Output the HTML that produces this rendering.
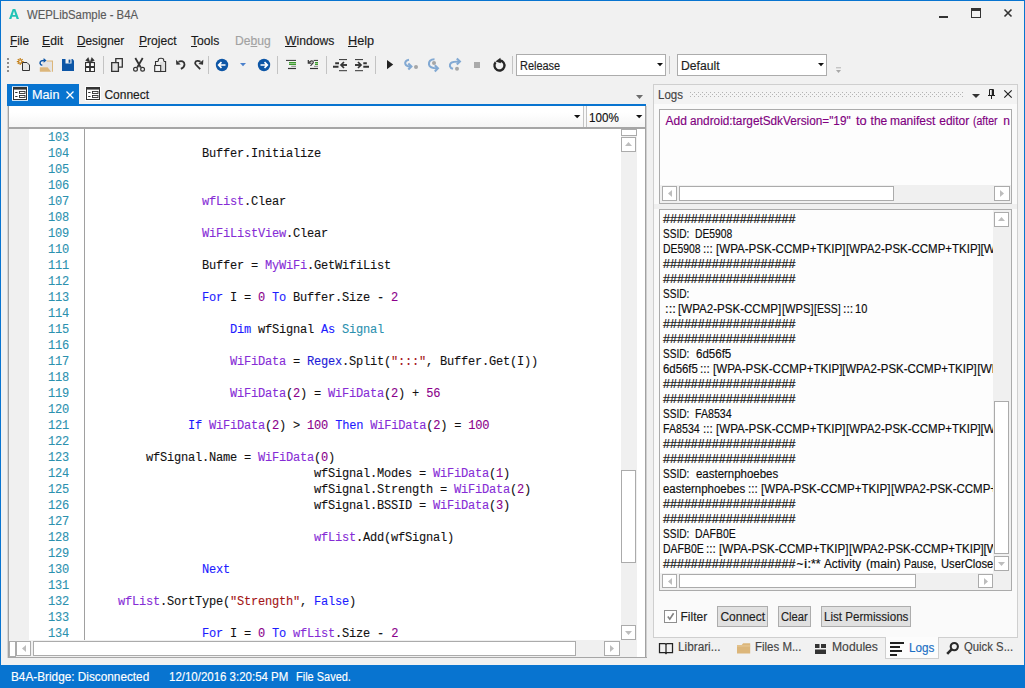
<!DOCTYPE html>
<html>
<head>
<meta charset="utf-8">
<title>WEPLibSample - B4A</title>
<style>
*{box-sizing:border-box;margin:0;padding:0}
html,body{width:1025px;height:688px;overflow:hidden;background:#f1f1f1}
body{position:relative;font-family:"Liberation Sans",sans-serif;font-size:12px;color:#1e1e1e}
.a{position:absolute}
.t{-webkit-text-stroke:0.15px currentColor}
.c,.ln{-webkit-text-stroke:0.1px currentColor}
svg{position:absolute;overflow:visible}
.t{position:absolute;white-space:pre;line-height:16px;height:16px;font-size:12px;transform-origin:0 0}
.t u{text-decoration:underline;text-decoration-thickness:1px;text-underline-offset:1px}
.c{position:absolute;white-space:pre;font-family:"Liberation Mono",monospace;font-size:12px;letter-spacing:-0.2px;line-height:16px;height:16px;color:#111}
.ln{position:absolute;left:40px;width:29px;text-align:right;white-space:pre;font-family:"Liberation Mono",monospace;font-size:12px;letter-spacing:-0.2px;line-height:16px;height:16px;color:#2b91af}
.k{color:#1c1cff}.r{color:#1c1cd8}.v{color:#862cd6}.n{color:#8b008b}.s{color:#a31515}.ty{color:#2b91af}
.sb{position:absolute;background:#fff;border:1px solid #ababab}
</style>
</head>
<body>
<div class="a" style="left:0px;top:0px;width:1025px;height:688px;background:#f1f1f1;border:1px solid #0874d0;"></div>
<div class="a" style="left:0px;top:0px;width:1025px;height:1.2px;background:#0874d0;"></div>
<!-- title bar -->
<svg class="a" style="left:9px;top:9px" width="10" height="10" viewBox="0 0 10 10"><path d="M0 10L3.700 0h2.600L10 10H7.600L6.900 7.800H3.100L2.400 10zM3.700 5.900h2.600L5 1.900z" fill="#22c3b5"/></svg>
<div class="t" style="left:26.95px;top:7px;color:#5a5a5a;transform:scaleX(0.9463);">WEPLibSample - B4A</div>
<div class="a" style="left:939px;top:16px;width:9px;height:2px;background:#333;"></div>
<div class="a" style="left:971px;top:8px;width:10px;height:10px;border:1px solid #333;border-top-width:3px"></div>
<svg class="a" style="left:1004px;top:9px" width="8" height="8" viewBox="0 0 8 8"><path d="M0.500 0.500l7 7M7.500 0.500l-7 7" stroke="#333" stroke-width="1.600" fill="none"/></svg>
<!-- menu -->
<div class="t" style="left:9.53px;top:33px;color:#1b1b1b;transform:scaleX(0.9821);"><u>F</u>ile</div>
<div class="t" style="left:42.00px;top:33px;color:#1b1b1b;transform:scaleX(1.0201);"><u>E</u>dit</div>
<div class="t" style="left:77.03px;top:33px;color:#1b1b1b;transform:scaleX(0.9821);"><u>D</u>esigner</div>
<div class="t" style="left:138.51px;top:33px;color:#1b1b1b;transform:scaleX(1.0062);"><u>P</u>roject</div>
<div class="t" style="left:190.73px;top:33px;color:#1b1b1b;transform:scaleX(1.0125);"><u>T</u>ools</div>
<div class="t" style="left:234.75px;top:33px;color:#a2a2a2;transform:scaleX(1.0118);">De<u>b</u>ug</div>
<div class="t" style="left:285.20px;top:33px;color:#1b1b1b;transform:scaleX(1.0116);"><u>W</u>indows</div>
<div class="t" style="left:348.46px;top:33px;color:#1b1b1b;transform:scaleX(1.0564);"><u>H</u>elp</div>
<!-- toolbar -->
<svg class="a" style="left:0;top:0" width="1025" height="80" viewBox="0 0 1025 80"><rect x="7" y="58" width="2" height="2" fill="#8c8c8c"/><rect x="7" y="62" width="2" height="2" fill="#8c8c8c"/><rect x="7" y="66" width="2" height="2" fill="#8c8c8c"/><rect x="7" y="70" width="2" height="2" fill="#8c8c8c"/><rect x="103" y="56" width="1" height="18" fill="#c3c3c3"/><rect x="208" y="56" width="1" height="18" fill="#c3c3c3"/><rect x="277" y="56" width="1" height="18" fill="#c3c3c3"/><rect x="326" y="56" width="1" height="18" fill="#c3c3c3"/><rect x="375" y="56" width="1" height="18" fill="#c3c3c3"/><rect x="512" y="56" width="1" height="18" fill="#c3c3c3"/><rect x="669" y="56" width="1" height="18" fill="#c3c3c3"/><g stroke="#c4801a" stroke-width="1.250" stroke-linecap="butt"><path d="M20.200 58v2.500M20.200 62.500v2.500M16.800 61.500h2.500M21.200 61.500h2.500M17.800 59.100l1.700 1.700M20.900 62.200l1.700 1.700M22.600 59.100l-1.700 1.700M19.500 62.200l-1.700 1.700"/></g><path d="M22.5 62.5h4.5l2.5 2.5v5.5h-7z" fill="#e6e6e6" stroke="#333" stroke-width="1"/><path d="M46.600 60.600h6.400v11.200h-1.100v-10h-5.300z" fill="#dcb67a"/><path d="M42.200 61.800h9.700v10h-1l-3.500-4.600h-5.200z" fill="#e4e4e4"/><path d="M39.800 67.200h7.800l3.600 4.600h-11.400z" fill="#dcb67a"/><path d="M42.300 65.300c-2.600-0.300-3-3.300-1-4.400 1-0.500 2.200-0.500 3.200-0.400" fill="none" stroke="#0d56a6" stroke-width="1.500"/><path d="M43.600 58l3 2.400-3 2.400z" fill="#0d56a6"/><path d="M62 59h10.5l1.5 1.5v10.5h-12z" fill="#0d56a6"/><rect x="65.5" y="59" width="6" height="4.5" fill="#f1f1f1"/><rect x="68.6" y="59.6" width="1.8" height="3.2" fill="#0d56a6"/><rect x="85" y="62" width="10" height="10" fill="#333"/><g fill="#fff"><rect x="86.100" y="63.100" width="3" height="2.900"/><rect x="90.900" y="63.100" width="3" height="2.900"/><rect x="86.100" y="68" width="3" height="3"/><rect x="90.900" y="68" width="3" height="3"/></g><path d="M90 62.500L85.700 60.400 88.200 57.600zM90 62.500L94.300 60.400 91.800 57.600z" fill="#333" stroke="#333" stroke-width="0.500" stroke-linejoin="round"/><path d="M115.800 58.700h6.500v8.500h-6.500z" fill="#f2f2f2" stroke="#333" stroke-width="1.300"/><path d="M111.700 62.600h6.700v8.700h-6.700z" fill="#e2e2e2" stroke="#333" stroke-width="1.300"/><g fill="none" stroke="#333"><path d="M135.300 58L140.800 67.500M142.700 58L137.200 67.500" stroke-width="1.800"/><circle cx="135.500" cy="69.300" r="1.900" stroke-width="1.200"/><circle cx="142.600" cy="69.300" r="1.900" stroke-width="1.200"/></g><rect x="160" y="62" width="5.500" height="9" fill="#e0e0e0"/><g fill="none" stroke="#333" stroke-width="1.100"><path d="M158 61.500h-2.500v4M164 61.500h1.600v10h-4.600"/><path d="M158.300 61.500v-1.500c0-1 1-1.700 2.700-1.700s2.700 0.700 2.700 1.700v1.500" /><rect x="154.700" y="65.500" width="6" height="6" fill="#f6f6f6"/></g><path d="M178.500 61.800c2.800-1.600 6-0.300 6 2.700 0 1.900-1.300 3.300-3.600 4.400" fill="none" stroke="#333" stroke-width="1.800"/><path d="M176 59.800l0.300 4.900 4.400-0.300z" fill="#333"/><path d="M200.200 69.200l-4.500-4.700c-1.200-1.500-0.300-3.300 1.500-3.600 1-0.200 2.300 0.200 3.300 0.900" fill="none" stroke="#333" stroke-width="1.800"/><path d="M203.300 59.700l-0.300 5-4.600-0.600z" fill="#333"/><circle cx="222" cy="65" r="6.200" fill="#0d56a6"/><path d="M225.500 65h-6.500M221.500 62.200l-2.800 2.800 2.800 2.800" fill="none" stroke="#fff" stroke-width="1.700"/><path d="M240 63h6l-3 3.200z" fill="#4a80cc"/><circle cx="264" cy="65" r="6.200" fill="#0d56a6"/><path d="M260.500 65h6.500M264.500 62.200l2.800 2.800-2.800 2.800" fill="none" stroke="#fff" stroke-width="1.700"/><path d="M286 60.400h10" stroke="#333" stroke-width="1"/><path d="M289 62.600h7M289 64.400h7" stroke="#3d9a2d" stroke-width="1.400"/><path d="M291.200 66.300h4.800" stroke="#8a8a8a" stroke-width="1"/><path d="M288 68.500h8" stroke="#333" stroke-width="1.200"/><path d="M308.300 60v3.200h3.200" fill="none" stroke="#333" stroke-width="1.200"/><path d="M309 62.800c1.200-2.600 4.300-2.600 4.300-0.500 0 1.500-2.300 2-2.600 3.700" fill="none" stroke="#333" stroke-width="1.200"/><path d="M313.700 60.400h4.300" stroke="#333" stroke-width="1"/><path d="M315 62.600h3M315 64.400h3" stroke="#3d9a2d" stroke-width="1.400"/><path d="M314 66.300h4" stroke="#8a8a8a" stroke-width="1"/><path d="M310 68.500h8" stroke="#333" stroke-width="1.200"/><g fill="none" stroke="#333"><path d="M339 59.600h8M339 70.700h8" stroke-width="1"/><path d="M335.200 63.200h3.800M333 66.700h5.500" stroke-width="1.900"/><path d="M341.500 65h5.500" stroke-width="1.900"/><path d="M344 62l-3 3 3 3" stroke-width="1.700"/></g><g fill="none" stroke="#333"><path d="M355 59.600h8M355 70.700h8" stroke-width="1"/><path d="M363.300 63.200h3.500M363.300 66.700h5.700" stroke-width="1.900"/><path d="M355 65h5.500" stroke-width="1.900"/><path d="M358 62l3 3-3 3" stroke-width="1.700"/></g><path d="M387 60l6.200 4.600-6.200 4.600z" fill="#222"/><g fill="none" stroke="#82a9d3" stroke-width="2.100"><path d="M409 59.700c-3 0.500-4.500 2.500-3.500 4.700 0.800 1.800 2.500 2.200 5.300 2.200"/><path d="M408.300 63.400l3.100 3.100-3.100 3.100"/></g><circle cx="416" cy="67" r="2" fill="#a6a6a6"/><g fill="none" stroke="#82a9d3" stroke-width="2.100"><path d="M434.500 59.200c-4 0-6 2.500-5.500 5.400 0.500 2.700 3 3.700 8.300 3.700"/><path d="M434.800 65.200l3.100 3.100-3.100 3.100"/></g><circle cx="434" cy="63" r="2" fill="#a6a6a6"/><g fill="none" stroke="#82a9d3" stroke-width="2.100"><path d="M453 68.800c-3.500-1-4-4-2-5.900 1.500-1.400 4-1.400 8.800-1.400"/><path d="M456.800 58.400l3.100 3.100-3.100 3.100"/></g><circle cx="457" cy="68.800" r="2" fill="#a6a6a6"/><rect x="474" y="62" width="6" height="6" fill="#aaa"/><path d="M495.600 62.300a5 5 0 1 0 4.300-1.800" fill="none" stroke="#262626" stroke-width="2.300"/><path d="M495.400 61.600l5-3.900 0.500 5.600z" fill="#262626"/><rect x="836" y="67.300" width="5" height="1" fill="#b2b2b2"/><path d="M836 70h5l-2.500 3z" fill="#a8a8a8"/></svg>
<div class="a" style="left:516px;top:54px;width:150px;height:22px;background:#fff;border:1px solid #acacac;"></div>
<div class="t" style="left:519.50px;top:58px;color:#1e1e1e;transform:scaleX(0.9127);">Release</div>
<svg class="a" style="left:656.8px;top:62.9px" width="6" height="3.2" viewBox="0 0 6 3.2"><path d="M0 0h6l-3.0 3.2z" fill="#111"/></svg>
<div class="a" style="left:677px;top:54px;width:150px;height:22px;background:#fff;border:1px solid #acacac;"></div>
<div class="t" style="left:680.50px;top:58px;color:#1e1e1e;transform:scaleX(1.0149);">Default</div>
<svg class="a" style="left:817.8px;top:62.9px" width="6" height="3.2" viewBox="0 0 6 3.2"><path d="M0 0h6l-3.0 3.2z" fill="#111"/></svg>
<!-- document tabs -->
<div class="a" style="left:7px;top:84px;width:72px;height:20px;background:#0874d0;"></div>
<div class="a" style="left:7px;top:104px;width:639.3px;height:2px;background:#0874d0;"></div>
<svg class="a" style="left:12px;top:86px" width="16" height="15" viewBox="0 0 16 15"><rect x="0" y="0.300" width="16" height="14.500" fill="#fff"/><rect x="1.500" y="1.500" width="13" height="12" fill="none" stroke="#333" stroke-width="1"/><rect x="1" y="1" width="14" height="2.600" fill="#333"/><path d="M3.200 6.500h2.300M3.200 10.500h2.300" stroke="#333" stroke-width="1"/><rect x="7.500" y="5.500" width="5.500" height="2" fill="none" stroke="#333" stroke-width="0.900"/><rect x="7.500" y="9.500" width="5.500" height="2" fill="none" stroke="#333" stroke-width="0.900"/></svg>
<div class="t" style="left:32.16px;top:86.5px;color:#fff;transform:scaleX(1.0558);">Main</div>
<svg class="a" style="left:66px;top:91px" width="8" height="8" viewBox="0 0 8 8"><path d="M0.500 0.500l7 7M7.500 0.500l-7 7" stroke="#fff" stroke-width="1.300" fill="none"/></svg>
<svg class="a" style="left:84.5px;top:86px" width="16" height="15" viewBox="0 0 16 15"><rect x="0" y="0.300" width="16" height="14.500" fill="#fff"/><rect x="1.500" y="1.500" width="13" height="12" fill="none" stroke="#333" stroke-width="1"/><rect x="1" y="1" width="14" height="2.600" fill="#333"/><path d="M3.200 6.500h2.300M3.200 10.500h2.300" stroke="#333" stroke-width="1"/><rect x="7.500" y="5.500" width="5.500" height="2" fill="none" stroke="#333" stroke-width="0.900"/><rect x="7.500" y="9.500" width="5.500" height="2" fill="none" stroke="#333" stroke-width="0.900"/></svg>
<div class="t" style="left:104.39px;top:86.5px;color:#1b1b1b;">Connect</div>
<svg class="a" style="left:636px;top:95px" width="7" height="4" viewBox="0 0 7 4"><path d="M0 0h7l-3.5 4z" fill="#6d6d6d"/></svg>
<!-- editor -->
<div class="a" style="left:8px;top:106px;width:638px;height:551px;background:#fff;"></div>
<div class="a" style="left:7px;top:106px;width:1px;height:552px;background:#d6d6d6;"></div>
<div class="a" style="left:8px;top:106px;width:1px;height:552px;background:#a2a2a2;"></div>
<div class="a" style="left:645px;top:106px;width:1px;height:552px;background:#a2a2a2;"></div>
<div class="a" style="left:646px;top:106px;width:1px;height:552px;background:#cfcfcf;"></div>
<div class="a" style="left:7.5px;top:656.6px;width:639px;height:1.7px;background:#a6a6a6;"></div>
<div class="a" style="left:9px;top:127px;width:636px;height:1.8px;background:#a6a6a6;"></div>
<div class="a" style="left:9px;top:106px;width:636px;height:21px;background:linear-gradient(#ffffff 30%,#f5f5f5)"></div>
<div class="a" style="left:583px;top:106px;width:1px;height:21px;background:#c4c4c4;"></div>
<div class="a" style="left:584px;top:106px;width:2px;height:21px;background:#f8f8f8;"></div>
<div class="a" style="left:586px;top:106px;width:1px;height:21px;background:#c4c4c4;"></div>
<svg class="a" style="left:574.2px;top:114.8px" width="6.4" height="3.3" viewBox="0 0 6.4 3.3"><path d="M0 0h6.4l-3.2 3.3z" fill="#111"/></svg>
<svg class="a" style="left:636.2px;top:114.8px" width="6.4" height="3.3" viewBox="0 0 6.4 3.3"><path d="M0 0h6.4l-3.2 3.3z" fill="#111"/></svg>
<div class="t" style="left:588.61px;top:110px;color:#111;transform:scaleX(0.9711);">100%</div>
<div class="a" style="left:9px;top:129px;width:20px;height:511px;background:#f0f0f0;"></div>
<div class="a" style="left:84px;top:129px;width:1px;height:511px;background:#a0a0a0;"></div>
<div class="ln" style="top:130px">103</div>
<div class="ln" style="top:146px">104</div>
<div class="c" style="left:202px;top:146px">Buffer.Initialize</div>
<div class="ln" style="top:162px">105</div>
<div class="ln" style="top:178px">106</div>
<div class="ln" style="top:194px">107</div>
<div class="c" style="left:202px;top:194px"><span class="v">wfList</span>.Clear</div>
<div class="ln" style="top:210px">108</div>
<div class="ln" style="top:226px">109</div>
<div class="c" style="left:202px;top:226px"><span class="v">WiFiListView</span>.Clear</div>
<div class="ln" style="top:242px">110</div>
<div class="ln" style="top:258px">111</div>
<div class="c" style="left:202px;top:258px">Buffer = <span class="v">MyWiFi</span>.GetWifiList</div>
<div class="ln" style="top:274px">112</div>
<div class="ln" style="top:290px">113</div>
<div class="c" style="left:202px;top:290px"><span class="k">For</span> I = <span class="n">0</span> <span class="k">To</span> Buffer.Size - <span class="n">2</span></div>
<div class="ln" style="top:306px">114</div>
<div class="ln" style="top:322px">115</div>
<div class="c" style="left:230px;top:322px"><span class="k">Dim</span> wfSignal <span class="k">As</span> <span class="ty">Signal</span></div>
<div class="ln" style="top:338px">116</div>
<div class="ln" style="top:354px">117</div>
<div class="c" style="left:230px;top:354px"><span class="v">WiFiData</span> = <span class="r">Regex</span>.Split(<span class="s">":::"</span>, Buffer.Get(I))</div>
<div class="ln" style="top:370px">118</div>
<div class="ln" style="top:386px">119</div>
<div class="c" style="left:230px;top:386px"><span class="v">WiFiData</span>(<span class="n">2</span>) = <span class="v">WiFiData</span>(<span class="n">2</span>) + <span class="n">56</span></div>
<div class="ln" style="top:402px">120</div>
<div class="ln" style="top:418px">121</div>
<div class="c" style="left:188px;top:418px"><span class="k">If</span> <span class="v">WiFiData</span>(<span class="n">2</span>) &gt; <span class="n">100</span> <span class="k">Then</span> <span class="v">WiFiData</span>(<span class="n">2</span>) = <span class="n">100</span></div>
<div class="ln" style="top:434px">122</div>
<div class="ln" style="top:450px">123</div>
<div class="c" style="left:146px;top:450px">wfSignal.Name = <span class="v">WiFiData</span>(<span class="n">0</span>)</div>
<div class="ln" style="top:466px">124</div>
<div class="c" style="left:314px;top:466px">wfSignal.Modes = <span class="v">WiFiData</span>(<span class="n">1</span>)</div>
<div class="ln" style="top:482px">125</div>
<div class="c" style="left:314px;top:482px">wfSignal.Strength = <span class="v">WiFiData</span>(<span class="n">2</span>)</div>
<div class="ln" style="top:498px">126</div>
<div class="c" style="left:314px;top:498px">wfSignal.BSSID = <span class="v">WiFiData</span>(<span class="n">3</span>)</div>
<div class="ln" style="top:514px">127</div>
<div class="ln" style="top:530px">128</div>
<div class="c" style="left:314px;top:530px"><span class="v">wfList</span>.Add(wfSignal)</div>
<div class="ln" style="top:546px">129</div>
<div class="ln" style="top:562px">130</div>
<div class="c" style="left:202px;top:562px"><span class="k">Next</span></div>
<div class="ln" style="top:578px">131</div>
<div class="ln" style="top:594px">132</div>
<div class="c" style="left:118px;top:594px"><span class="v">wfList</span>.SortType(<span class="s">"Strength"</span>, <span class="k">False</span>)</div>
<div class="ln" style="top:610px">133</div>
<div class="ln" style="top:626px">134</div>
<div class="c" style="left:202px;top:626px"><span class="k">For</span> I = <span class="n">0</span> <span class="k">To</span> <span class="v">wfList</span>.Size - <span class="n">2</span></div>
<div class="a" style="left:621px;top:129px;width:15.5px;height:528px;background:#f0f0f0;"></div>
<div class="a" style="left:620.5px;top:129px;width:16px;height:7px;background:#fff;border:1px solid #ababab;"></div>
<div class="sb" style="left:621px;top:137px;width:15px;height:15px"></div>
<svg class="a" style="left:625px;top:142px" width="7" height="4" viewBox="0 0 7 4"><path d="M0 4h7L3.500 0z" fill="#bdbdbd"/></svg>
<div class="sb" style="left:621px;top:470px;width:15px;height:93px"></div>
<div class="sb" style="left:621px;top:625px;width:15px;height:15px"></div>
<svg class="a" style="left:625px;top:631px" width="7" height="4" viewBox="0 0 7 4"><path d="M0 0h7L3.500 4z" fill="#bdbdbd"/></svg>
<div class="a" style="left:9px;top:640px;width:612px;height:17px;background:#f0f0f0;"></div>
<div class="a" style="left:9px;top:640.5px;width:7px;height:16px;background:#fff;border:1px solid #ababab;"></div>
<div class="sb" style="left:16px;top:641px;width:15px;height:15px"></div>
<svg class="a" style="left:22px;top:645px" width="4" height="7" viewBox="0 0 4 7"><path d="M4 0v7L0 3.500z" fill="#bdbdbd"/></svg>
<div class="sb" style="left:33px;top:641px;width:543px;height:15px"></div>
<div class="sb" style="left:604px;top:641px;width:16px;height:15px"></div>
<svg class="a" style="left:610px;top:645px" width="4" height="7" viewBox="0 0 4 7"><path d="M0 0v7l4-3.500z" fill="#bdbdbd"/></svg>
<!-- right panel -->
<div class="a" style="left:653px;top:84px;width:365px;height:554px;background:#fafafa;border:1px solid #cfcfcf;"></div>
<div class="a" style="left:654px;top:85px;width:363px;height:19px;background:#f3f3f3;"></div>
<div class="t" style="left:658.26px;top:87px;color:#444;transform:scaleX(0.9592);">Logs</div>
<svg class="a" style="left:690px;top:92px" width="274" height="5" viewBox="0 0 274 5"><defs><pattern id="dp" width="4" height="4" patternUnits="userSpaceOnUse"><rect x="0" y="0" width="1" height="1" fill="#b4b4b4"/><rect x="2" y="2" width="1" height="1" fill="#b4b4b4"/></pattern></defs><rect width="274" height="5" fill="url(#dp)"/></svg>
<svg class="a" style="left:972px;top:94px" width="8" height="4" viewBox="0 0 8 4"><path d="M0 0h8L4 4z" fill="#333"/></svg>
<svg class="a" style="left:988px;top:89px" width="7" height="10" viewBox="0 0 7 10"><path d="M1.500 0.500h4v5.500M1.500 0.500v5.500M0 6.500h7M3.500 6.500v3.500" fill="none" stroke="#222" stroke-width="1"/><path d="M4.500 1v5" stroke="#222" stroke-width="1.500"/></svg>
<svg class="a" style="left:1004px;top:90px" width="8" height="8" viewBox="0 0 8 8"><path d="M0.300 0.300l7.400 7.400M7.700 0.300l-7.400 7.400" stroke="#222" stroke-width="1.200" fill="none"/></svg>
<div class="a" style="left:659px;top:109px;width:353px;height:95px;background:#fdfdfd;border:1px solid #ababab;"></div>
<div class="a" style="left:660px;top:110px;width:351px;height:20px;overflow:hidden"><div class="t" style="left:5.48px;top:3px;color:#800080;">Add</div><div class="t" style="left:30.25px;top:3px;color:#800080;transform:scaleX(0.9818);">android:targetSdkVersion="19"</div><div class="t" style="left:196.06px;top:3px;color:#800080;transform:scaleX(1.0727);">to</div><div class="t" style="left:210.57px;top:3px;color:#800080;">the</div><div class="t" style="left:229.95px;top:3px;color:#800080;">manifest</div><div class="t" style="left:279.24px;top:3px;color:#800080;">editor</div><div class="t" style="left:313.35px;top:3px;color:#800080;transform:scaleX(0.8775);">(after</div><div class="t" style="left:343.20px;top:3px;color:#800080;">n</div></div>
<div class="a" style="left:660px;top:185px;width:351px;height:18px;background:#f0f0f0;"></div>
<div class="sb" style="left:662px;top:186px;width:15px;height:15px"></div>
<svg class="a" style="left:668px;top:190px" width="4" height="7" viewBox="0 0 4 7"><path d="M4 0v7L0 3.500z" fill="#bdbdbd"/></svg>
<div class="sb" style="left:679px;top:186px;width:215px;height:15px"></div>
<div class="sb" style="left:994px;top:186px;width:16px;height:15px"></div>
<svg class="a" style="left:1000px;top:190px" width="4" height="7" viewBox="0 0 4 7"><path d="M0 0v7l4-3.500z" fill="#bdbdbd"/></svg>
<div class="a" style="left:654px;top:204px;width:363px;height:5px;background:#efefef;"></div>
<div class="a" style="left:659px;top:209px;width:353px;height:382px;background:#fdfdfd;border:1px solid #ababab;"></div>
<div class="a" style="left:660px;top:210px;width:333px;height:363px;overflow:hidden"><div class="t" style="left:3.19px;top:0.5px;color:#0c0c0c;transform:scaleX(1.0439);">###################</div><div class="t" style="left:3.14px;top:15.5px;color:#0c0c0c;transform:scaleX(0.8417);">SSID:</div><div class="t" style="left:35.40px;top:15.5px;color:#0c0c0c;transform:scaleX(0.8600);">DE5908</div><div class="t" style="left:2.90px;top:30.5px;color:#0c0c0c;transform:scaleX(0.8648);">DE5908</div><div class="t" style="left:43.33px;top:30.5px;color:#0c0c0c;transform:scaleX(0.9730);">:::</div><div class="t" style="left:56.17px;top:30.5px;color:#0c0c0c;transform:scaleX(0.9647);">[WPA-PSK-CCMP+TKIP]</div><div class="t" style="left:185.58px;top:30.5px;color:#0c0c0c;transform:scaleX(0.9573);">[WPA2-PSK-CCMP+TKIP]</div><div class="t" style="left:320.44px;top:30.5px;color:#0c0c0c;">[WPS][ESS]</div><div class="t" style="left:3.19px;top:45.5px;color:#0c0c0c;transform:scaleX(1.0439);">###################</div><div class="t" style="left:3.19px;top:60.5px;color:#0c0c0c;transform:scaleX(1.0439);">###################</div><div class="t" style="left:3.14px;top:75.5px;color:#0c0c0c;transform:scaleX(0.8417);">SSID:</div><div class="t" style="left:5.06px;top:90.5px;color:#0c0c0c;transform:scaleX(1.0883);">:::</div><div class="t" style="left:18.43px;top:90.5px;color:#0c0c0c;transform:scaleX(0.9642);">[WPA2-PSK-CCMP]</div><div class="t" style="left:122.21px;top:90.5px;color:#0c0c0c;transform:scaleX(0.9291);">[WPS]</div><div class="t" style="left:153.51px;top:90.5px;color:#0c0c0c;transform:scaleX(0.8699);">[ESS]</div><div class="t" style="left:182.63px;top:90.5px;color:#0c0c0c;transform:scaleX(1.0243);">:::</div><div class="t" style="left:194.91px;top:90.5px;color:#0c0c0c;transform:scaleX(0.9194);">10</div><div class="t" style="left:3.19px;top:105.5px;color:#0c0c0c;transform:scaleX(1.0439);">###################</div><div class="t" style="left:3.19px;top:120.5px;color:#0c0c0c;transform:scaleX(1.0439);">###################</div><div class="t" style="left:3.14px;top:135.5px;color:#0c0c0c;transform:scaleX(0.8417);">SSID:</div><div class="t" style="left:35.66px;top:135.5px;color:#0c0c0c;transform:scaleX(0.9609);">6d56f5</div><div class="t" style="left:3.17px;top:150.5px;color:#0c0c0c;transform:scaleX(0.9497);">6d56f5</div><div class="t" style="left:40.08px;top:150.5px;color:#0c0c0c;transform:scaleX(0.9730);">:::</div><div class="t" style="left:52.92px;top:150.5px;color:#0c0c0c;transform:scaleX(0.9647);">[WPA-PSK-CCMP+TKIP]</div><div class="t" style="left:182.33px;top:150.5px;color:#0c0c0c;transform:scaleX(0.9573);">[WPA2-PSK-CCMP+TKIP]</div><div class="t" style="left:317.19px;top:150.5px;color:#0c0c0c;">[WPS][ESS]</div><div class="t" style="left:3.19px;top:165.5px;color:#0c0c0c;transform:scaleX(1.0439);">###################</div><div class="t" style="left:3.19px;top:180.5px;color:#0c0c0c;transform:scaleX(1.0439);">###################</div><div class="t" style="left:3.14px;top:195.5px;color:#0c0c0c;transform:scaleX(0.8417);">SSID:</div><div class="t" style="left:35.38px;top:195.5px;color:#0c0c0c;transform:scaleX(0.8847);">FA8534</div><div class="t" style="left:2.87px;top:210.5px;color:#0c0c0c;transform:scaleX(0.8896);">FA8534</div><div class="t" style="left:43.33px;top:210.5px;color:#0c0c0c;transform:scaleX(0.9730);">:::</div><div class="t" style="left:56.17px;top:210.5px;color:#0c0c0c;transform:scaleX(0.9647);">[WPA-PSK-CCMP+TKIP]</div><div class="t" style="left:185.58px;top:210.5px;color:#0c0c0c;transform:scaleX(0.9573);">[WPA2-PSK-CCMP+TKIP]</div><div class="t" style="left:320.44px;top:210.5px;color:#0c0c0c;">[WPS][ESS]</div><div class="t" style="left:3.19px;top:225.5px;color:#0c0c0c;transform:scaleX(1.0439);">###################</div><div class="t" style="left:3.19px;top:240.5px;color:#0c0c0c;transform:scaleX(1.0439);">###################</div><div class="t" style="left:3.14px;top:255.5px;color:#0c0c0c;transform:scaleX(0.8417);">SSID:</div><div class="t" style="left:35.76px;top:255.5px;color:#0c0c0c;transform:scaleX(0.9545);">easternphoebes</div><div class="t" style="left:3.26px;top:270.5px;color:#0c0c0c;transform:scaleX(0.9545);">easternphoebes</div><div class="t" style="left:88.33px;top:270.5px;color:#0c0c0c;transform:scaleX(0.9730);">:::</div><div class="t" style="left:101.17px;top:270.5px;color:#0c0c0c;transform:scaleX(0.9647);">[WPA-PSK-CCMP+TKIP]</div><div class="t" style="left:230.58px;top:270.5px;color:#0c0c0c;transform:scaleX(0.9573);">[WPA2-PSK-CCMP+TKIP]</div><div class="t" style="left:365.44px;top:270.5px;color:#0c0c0c;">[WPS][ESS]</div><div class="t" style="left:3.19px;top:285.5px;color:#0c0c0c;transform:scaleX(1.0439);">###################</div><div class="t" style="left:3.19px;top:300.5px;color:#0c0c0c;transform:scaleX(1.0439);">###################</div><div class="t" style="left:3.14px;top:315.5px;color:#0c0c0c;transform:scaleX(0.8417);">SSID:</div><div class="t" style="left:35.39px;top:315.5px;color:#0c0c0c;transform:scaleX(0.8720);">DAFB0E</div><div class="t" style="left:2.89px;top:330.5px;color:#0c0c0c;transform:scaleX(0.8720);">DAFB0E</div><div class="t" style="left:46.33px;top:330.5px;color:#0c0c0c;transform:scaleX(0.9730);">:::</div><div class="t" style="left:59.17px;top:330.5px;color:#0c0c0c;transform:scaleX(0.9647);">[WPA-PSK-CCMP+TKIP]</div><div class="t" style="left:188.58px;top:330.5px;color:#0c0c0c;transform:scaleX(0.9573);">[WPA2-PSK-CCMP+TKIP]</div><div class="t" style="left:323.44px;top:330.5px;color:#0c0c0c;">[WPS][ESS]</div><div class="t" style="left:3.19px;top:345.5px;color:#0c0c0c;transform:scaleX(1.0439);">###################</div><div class="t" style="left:136.46px;top:345.5px;color:#0c0c0c;">~</div><div class="t" style="left:143.77px;top:345.5px;color:#0c0c0c;transform:scaleX(1.2190);">i:</div><div class="t" style="left:150.80px;top:345.5px;color:#0c0c0c;transform:scaleX(1.0269);">**</div><div class="t" style="left:163.98px;top:345.5px;color:#0c0c0c;transform:scaleX(0.9748);">Activity</div><div class="t" style="left:206.49px;top:345.5px;color:#0c0c0c;transform:scaleX(1.0150);">(main)</div><div class="t" style="left:244.39px;top:345.5px;color:#0c0c0c;transform:scaleX(0.8698);">Pause,</div><div class="t" style="left:281.38px;top:345.5px;color:#0c0c0c;transform:scaleX(0.9346);">UserClosed</div></div>
<div class="a" style="left:993px;top:210px;width:18px;height:363px;background:#f0f0f0;"></div>
<div class="sb" style="left:994px;top:212px;width:15px;height:15px"></div>
<svg class="a" style="left:998px;top:217px" width="7" height="4" viewBox="0 0 7 4"><path d="M0 4h7L3.500 0z" fill="#bdbdbd"/></svg>
<div class="sb" style="left:994px;top:401px;width:15px;height:153px"></div>
<div class="sb" style="left:994px;top:556px;width:15px;height:15px"></div>
<svg class="a" style="left:998px;top:562px" width="7" height="4" viewBox="0 0 7 4"><path d="M0 0h7L3.500 4z" fill="#bdbdbd"/></svg>
<div class="a" style="left:660px;top:573px;width:351px;height:17px;background:#f0f0f0;"></div>
<div class="sb" style="left:662px;top:573.5px;width:15px;height:14.5px"></div>
<svg class="a" style="left:668px;top:578px" width="4" height="7" viewBox="0 0 4 7"><path d="M4 0v7L0 3.500z" fill="#bdbdbd"/></svg>
<div class="sb" style="left:679px;top:573.5px;width:237px;height:14.5px"></div>
<div class="sb" style="left:978px;top:573.5px;width:15px;height:14.5px"></div>
<svg class="a" style="left:984px;top:578px" width="4" height="7" viewBox="0 0 4 7"><path d="M0 0v7l4-3.500z" fill="#bdbdbd"/></svg>
<div class="a" style="left:664px;top:610.3px;width:13px;height:13px;background:#fff;border:1px solid #8e8e8e;"></div>
<svg class="a" style="left:666px;top:612.3px" width="9" height="9" viewBox="0 0 9 9"><path d="M1.800 4.600l2 2.600L7.600 1.200" fill="none" stroke="#808080" stroke-width="1.600"/></svg>
<div class="t" style="left:680.51px;top:608.5px;color:#1e1e1e;">Filter</div>
<div class="a" style="left:717px;top:606px;width:51px;height:21px;background:#e1e1e1;border:1px solid #adadad;"></div>
<div class="t" style="left:720.39px;top:608.5px;color:#1e1e1e;">Connect</div>
<div class="a" style="left:778px;top:606px;width:33px;height:21px;background:#e1e1e1;border:1px solid #adadad;"></div>
<div class="t" style="left:781.43px;top:608.5px;color:#1e1e1e;transform:scaleX(0.9330);">Clear</div>
<div class="a" style="left:821px;top:606px;width:90px;height:21px;background:#e1e1e1;border:1px solid #adadad;"></div>
<div class="t" style="left:823.55px;top:608.5px;color:#1e1e1e;transform:scaleX(0.9658);">List Permissions</div>
<svg class="a" style="left:659px;top:643px" width="14" height="11" viewBox="0 0 14 11"><path d="M0.500 0.500h5.500l1 1 1-1h5.500v9h-5.500l-1 1-1-1h-5.500zM7 1.500v9" fill="none" stroke="#222" stroke-width="1.250"/></svg>
<div class="t" style="left:677.93px;top:639px;color:#444;transform:scaleX(0.9814);">Librari...</div>
<svg class="a" style="left:736.8px;top:642.3px" width="13.2" height="11.700" viewBox="0 0 14 12"><path d="M0 3h5l1.500-2h7.500v11h-14z" fill="#dcb67a"/><path d="M0 4h14" stroke="#e8cc9c" stroke-width="1"/></svg>
<div class="t" style="left:755.06px;top:639px;color:#444;transform:scaleX(0.9552);">Files M...</div>
<svg class="a" style="left:815px;top:644px" width="11" height="10" viewBox="0 0 11 10"><rect x="0" y="0" width="4.500" height="4" fill="#333"/><rect x="6" y="0" width="5" height="4" fill="#333"/><rect x="0" y="5.500" width="11" height="4.500" fill="#333"/></svg>
<div class="t" style="left:831.70px;top:639px;color:#444;transform:scaleX(1.0128);">Modules</div>
<div class="a" style="left:885px;top:637px;width:54px;height:21.7px;background:#fcfcfc;border:1px solid #cfcfcf;border-top:none"></div>
<svg class="a" style="left:890px;top:642px" width="14" height="14" viewBox="0 0 14 14"><path d="M0 1h14M0 5h10M0 9h12M0 13h7" stroke="#222" stroke-width="2"/></svg>
<div class="t" style="left:909.04px;top:639.5px;color:#1a6fc4;transform:scaleX(0.9755);">Logs</div>
<svg class="a" style="left:946px;top:642px" width="13" height="13" viewBox="0 0 13 13"><circle cx="8.300" cy="4.600" r="3.600" fill="none" stroke="#2a2a2a" stroke-width="2.100"/><path d="M5.600 7.400l-4.400 4.400" stroke="#2a2a2a" stroke-width="2.600"/></svg>
<div class="t" style="left:964.46px;top:639px;color:#444;transform:scaleX(0.9434);">Quick S...</div>
<!-- status bar -->
<div class="a" style="left:0px;top:665px;width:1025px;height:23px;background:#0874d0;"></div>
<div class="t" style="left:10.53px;top:669px;color:#fff;transform:scaleX(0.9821);">B4A-Bridge: Disconnected</div>
<div class="t" style="left:168.63px;top:669px;color:#fff;transform:scaleX(0.9563);">12/10/2016 3:20:54 PM</div>
<div class="t" style="left:296.10px;top:669px;color:#fff;transform:scaleX(0.9146);">File Saved.</div>
</body>
</html>
